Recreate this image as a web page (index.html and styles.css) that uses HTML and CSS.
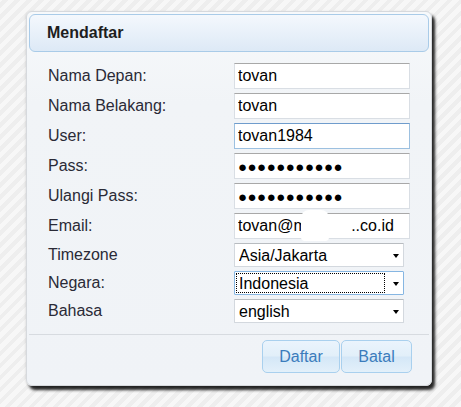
FILE: index.html
```html
<!DOCTYPE html>
<html>
<head>
<meta charset="utf-8">
<link rel="stylesheet" href="styles.css">
</head>
<body>
<div class="panel">
  <div class="head">Mendaftar</div>
  <form class="grid">
    <label class="lbl">Nama Depan:</label>
    <input class="field" type="text" value="tovan">
    <label class="lbl">Nama Belakang:</label>
    <input class="field" type="text" value="tovan">
    <label class="lbl">User:</label>
    <input class="field focus" type="text" value="tovan1984">
    <label class="lbl">Pass:</label>
    <input class="field dots" type="text" value="●●●●●●●●●●●">
    <label class="lbl">Ulangi Pass:</label>
    <input class="field dots" type="text" value="●●●●●●●●●●●">
    <label class="lbl">Email:</label>
    <div class="emailwrap">
      <input class="field" type="text" value="tovan@m          ..co.id">
      <span class="blot"></span>
    </div>
    <label class="lbl">Timezone</label>
    <div class="sel"><select><option>Asia/Jakarta</option></select></div>
    <label class="lbl">Negara:</label>
    <div class="sel active"><select><option>Indonesia</option></select></div>
    <label class="lbl">Bahasa</label>
    <div class="sel"><select><option>english</option></select></div>
  </form>
  <div class="sep"></div>
  <div class="actions">
    <button class="btn daftar" type="button">Daftar</button>
    <button class="btn batal" type="button">Batal</button>
  </div>
</div>
</body>
</html>
```
FILE: styles.css
```css
html, body {
  margin: 0;
  padding: 0;
}
body {
  width: 461px;
  height: 407px;
  overflow: hidden;
  font-family: "Liberation Sans", Arial, sans-serif;
  background: repeating-linear-gradient(-45deg, #f7f7f7 0px, #f7f7f7 4.5px, #eeeeee 4.5px, #eeeeee 8.5px);
  padding-top: 11px;
  padding-left: 26px;
  box-sizing: border-box;
}
.panel {
  width: 406px;
  box-sizing: border-box;
  border: 1px solid #d6d9dd;
  border-radius: 6px;
  background: linear-gradient(#f7f9fb 0px, #f1f4f7 90px, #f0f3f7 100%);
  box-shadow: 3px 4px 3px rgba(0, 0, 0, 0.85), -1px 0 2px rgba(0, 0, 0, 0.08);
  padding: 2px 2px 12px 2px;
}
.head {
  height: 38px;
  box-sizing: border-box;
  border: 1px solid #a9cbe8;
  border-radius: 6px;
  background: linear-gradient(#f4f8fd, #dde9f6);
  font-weight: bold;
  font-size: 16px;
  color: #1e1e1e;
  padding-left: 17px;
  line-height: 36px;
}
.grid {
  margin: 11px 0 0 0;
  padding-left: 19px;
  display: grid;
  grid-template-columns: 186px 176px;
  row-gap: 4px;
  align-items: center;
}
.lbl {
  font-size: 16px;
  color: #2a2a36;
}
.field {
  box-sizing: border-box;
  width: 176px;
  height: 26px;
  margin: 0;
  border: 1px solid #d9dee4;
  border-top-color: #a8a8a8;
  background: #fff;
  font-family: "Liberation Sans", Arial, sans-serif;
  font-size: 16px;
  color: #000;
  padding: 0 0 0 3px;
  outline: none;
}
.field.focus {
  border-color: #9cc0e0;
  border-top-color: #6f9ccc;
}
.dots {
  font-size: 15px;
  letter-spacing: 0.5px;
}
.emailwrap {
  position: relative;
  height: 26px;
}
.blot {
  position: absolute;
  left: 67px;
  top: -3px;
  width: 28px;
  height: 31px;
  background: #fff;
  border-radius: 8px 8px 4px 4px;
}
.sel {
  position: relative;
  width: 170px;
  height: 24px;
}
.sel select {
  appearance: none;
  -webkit-appearance: none;
  box-sizing: border-box;
  width: 170px;
  height: 24px;
  margin: 0;
  border: 1px solid #d3d8de;
  border-top-color: #b8bcc0;
  border-radius: 1px;
  background: #fff;
  font-family: "Liberation Sans", Arial, sans-serif;
  font-size: 16px;
  color: #000;
  padding: 0 0 0 4px;
  outline: none;
}
.sel::after {
  content: "";
  position: absolute;
  right: 5px;
  top: 11px;
  border-left: 3.5px solid transparent;
  border-right: 3.5px solid transparent;
  border-top: 4px solid #000;
  pointer-events: none;
}
.sel.active select {
  border-color: #86b6e2;
}
.sel.active::before {
  content: "";
  position: absolute;
  left: 2px;
  top: 2px;
  width: 149px;
  height: 20px;
  box-sizing: border-box;
  border: 1px dotted #000;
  pointer-events: none;
}
.sep {
  height: 1px;
  background: #d7dbe0;
  margin-top: 11px;
}
.actions {
  display: flex;
  justify-content: flex-end;
  gap: 1px;
  margin-top: 5px;
  padding-right: 17px;
}
.btn {
  height: 33px;
  box-sizing: border-box;
  border: 1px solid #a9d0ee;
  border-radius: 5px;
  background: linear-gradient(#eaf4fd 0%, #e2eff9 48%, #d4e7f7 52%, #e3f0fa 100%);
  font-family: "Liberation Sans", Arial, sans-serif;
  font-size: 16px;
  color: #3b7cbc;
  padding: 0;
}
.daftar { width: 78px; }
.batal { width: 71px; }
```
